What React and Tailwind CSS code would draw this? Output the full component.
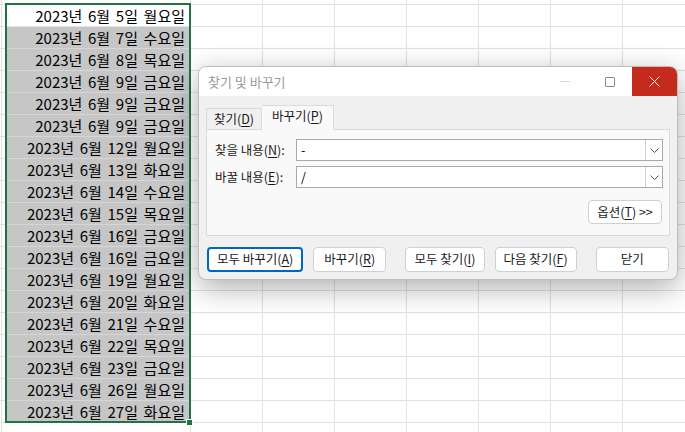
const ROWS = [
  "2023년 6월 5일 월요일",
  "2023년 6월 7일 수요일",
  "2023년 6월 8일 목요일",
  "2023년 6월 9일 금요일",
  "2023년 6월 9일 금요일",
  "2023년 6월 9일 금요일",
  "2023년 6월 12일 월요일",
  "2023년 6월 13일 화요일",
  "2023년 6월 14일 수요일",
  "2023년 6월 15일 목요일",
  "2023년 6월 16일 금요일",
  "2023년 6월 16일 금요일",
  "2023년 6월 19일 월요일",
  "2023년 6월 20일 화요일",
  "2023년 6월 21일 수요일",
  "2023년 6월 22일 목요일",
  "2023년 6월 23일 금요일",
  "2023년 6월 26일 월요일",
  "2023년 6월 27일 화요일",
];

const FONT = { fontFamily: '"Noto Sans CJK KR", "Noto Sans", sans-serif' };

function GridRow({ height, text, selected, active }) {
  return (
    <div className="flex" style={{ height }}>
      <div className="w-[2px] shrink-0 border-r border-b border-[#e1e1e1]" />
      <div className="w-[4px] shrink-0 border-b border-[#e1e1e1]" />
      <div
        className={
          "w-[185px] shrink-0 border-r border-b flex items-center justify-end pr-[5px] pb-px text-[15px] text-black leading-none [word-spacing:2.3px] " +
          (selected ? "bg-[#c6c6c6] border-[#d6d6d6]" : active ? "bg-white border-[#e1e1e1]" : "border-[#e1e1e1]")
        }
      >
        {text}
      </div>
      {[0, 1, 2, 3, 4, 5, 6].map((i) => (
        <div key={i} className="w-[72px] shrink-0 border-r border-b border-[#e1e1e1]" />
      ))}
    </div>
  );
}

function Mn({ children }) {
  return <span className="underline underline-offset-2">{children}</span>;
}

function Btn({ w, focused, children }) {
  return (
    <div
      className={
        "h-[25px] flex items-center justify-center rounded-[4px] bg-white text-[12.5px] text-[#1a1a1a] " +
        (focused ? "border-2 border-[#0067c0]" : "border border-[#c9d1dc]")
      }
      style={{ width: w }}
    >
      {children}
    </div>
  );
}

function Combo({ value }) {
  return (
    <div className="h-[22px] w-[367px] flex border border-[#a8a8ae] bg-white">
      <div className="flex-1 pl-[4px] text-[12.5px] leading-[20px] text-black">{value}</div>
      <div className="w-[17px] h-full flex items-center justify-center border-l border-[#d0d0d0]">
        <svg width="9" height="5" viewBox="0 0 9 5">
          <path d="M0.5 0.5 L4.5 4.5 L8.5 0.5" fill="none" stroke="#555" strokeWidth="1" />
        </svg>
      </div>
    </div>
  );
}

export default function App() {
  return (
    <div className="relative w-[685px] h-[432px] overflow-hidden bg-white" style={FONT}>
      {/* sheet */}
      <div className="flex flex-col">
        <GridRow height={5} />
        {ROWS.map((t, i) => (
          <GridRow key={i} height={22} text={t} selected={i > 0} active={i === 0} />
        ))}
        <GridRow height={22} />
      </div>

      {/* selection frame */}
      <div className="absolute left-[5px] top-[3px] w-[186px] h-[420px] border-2 border-[#217346]" />
      <div className="absolute left-[186px] top-[419px] w-[7px] h-[7px] bg-[#217346] border border-white" />

      {/* dialog */}
      <div className="absolute left-[198px] top-[66px] w-[480px] h-[214px] rounded-[8px] overflow-hidden border border-[#bdbdbd] bg-[#f0f0f0] shadow-[0_8px_30px_rgba(0,0,0,0.32)] flex flex-col">
        <div className="h-[29px] bg-white flex items-stretch shrink-0">
          <div className="flex-1 pl-[9px] flex items-center text-[13px] text-[#9a9a9a]">찾기 및 바꾸기</div>
          <div className="w-[45px] flex items-center justify-center">
            <div className="w-[10px] h-px bg-[#d8d8d8]" />
          </div>
          <div className="w-[45px] flex items-center justify-center">
            <div className="w-[10px] h-[10px] border border-[#8a8a8a] rounded-[1px]" />
          </div>
          <div className="w-[45px] bg-[#c42b1c] flex items-center justify-center">
            <svg width="11" height="11" viewBox="0 0 11 11">
              <path d="M0.5 0.5 L10.5 10.5 M10.5 0.5 L0.5 10.5" stroke="#fff" strokeWidth="1" />
            </svg>
          </div>
        </div>

        <div className="flex flex-col pl-[7px] pr-[8px] pt-[8px]">
          {/* tabs */}
          <div className="flex items-end h-[25px]">
            <div className="w-[56px] h-[21px] border border-b-0 border-[#dadada] bg-[#f0f0f0] flex items-center justify-center text-[12.5px] text-[#1a1a1a]">
              찾기(<Mn>D</Mn>)
            </div>
            <div className="w-[72px] h-[25px] border border-b-0 border-l-0 border-[#dadada] bg-[#f9f9f9] flex items-center justify-center text-[12.5px] text-[#1a1a1a] relative z-10 -mb-px pb-[3px]">
              바꾸기(<Mn>P</Mn>)
            </div>
          </div>
          <div className="w-[464px] h-[107px] border border-[#dadada] bg-[#f9f9f9] flex flex-col pt-[9px] pl-[8px] pr-[6px]">
            <div className="flex items-center">
              <div className="w-[81px] text-[12.5px] text-[#1a1a1a]">찾을 내용(<Mn>N</Mn>):</div>
              <Combo value="-" />
            </div>
            <div className="flex items-center mt-[5px]">
              <div className="w-[81px] text-[12.5px] text-[#1a1a1a]">바꿀 내용(<Mn>E</Mn>):</div>
              <Combo value="/" />
            </div>
            <div className="flex justify-end mt-[12px] pr-px">
              <div className="w-[74px] h-[24px] flex items-center justify-center rounded-[4px] bg-white border border-[#d0d0d0] text-[12.5px] text-[#1a1a1a]">
                옵션(<Mn>T</Mn>) &gt;&gt;
              </div>
            </div>
          </div>

          {/* buttons */}
          <div className="flex mt-[11px] pl-px">
            <Btn w={97} focused>모두 바꾸기(<Mn>A</Mn>)</Btn>
            <div className="w-[10px]" />
            <Btn w={74}>바꾸기(<Mn>R</Mn>)</Btn>
            <div className="w-[19px]" />
            <Btn w={80}>모두 찾기(<Mn>I</Mn>)</Btn>
            <div className="w-[10px]" />
            <Btn w={83}>다음 찾기(<Mn>F</Mn>)</Btn>
            <div className="w-[19px]" />
            <Btn w={74}>닫기</Btn>
          </div>
        </div>
      </div>
    </div>
  );
}
